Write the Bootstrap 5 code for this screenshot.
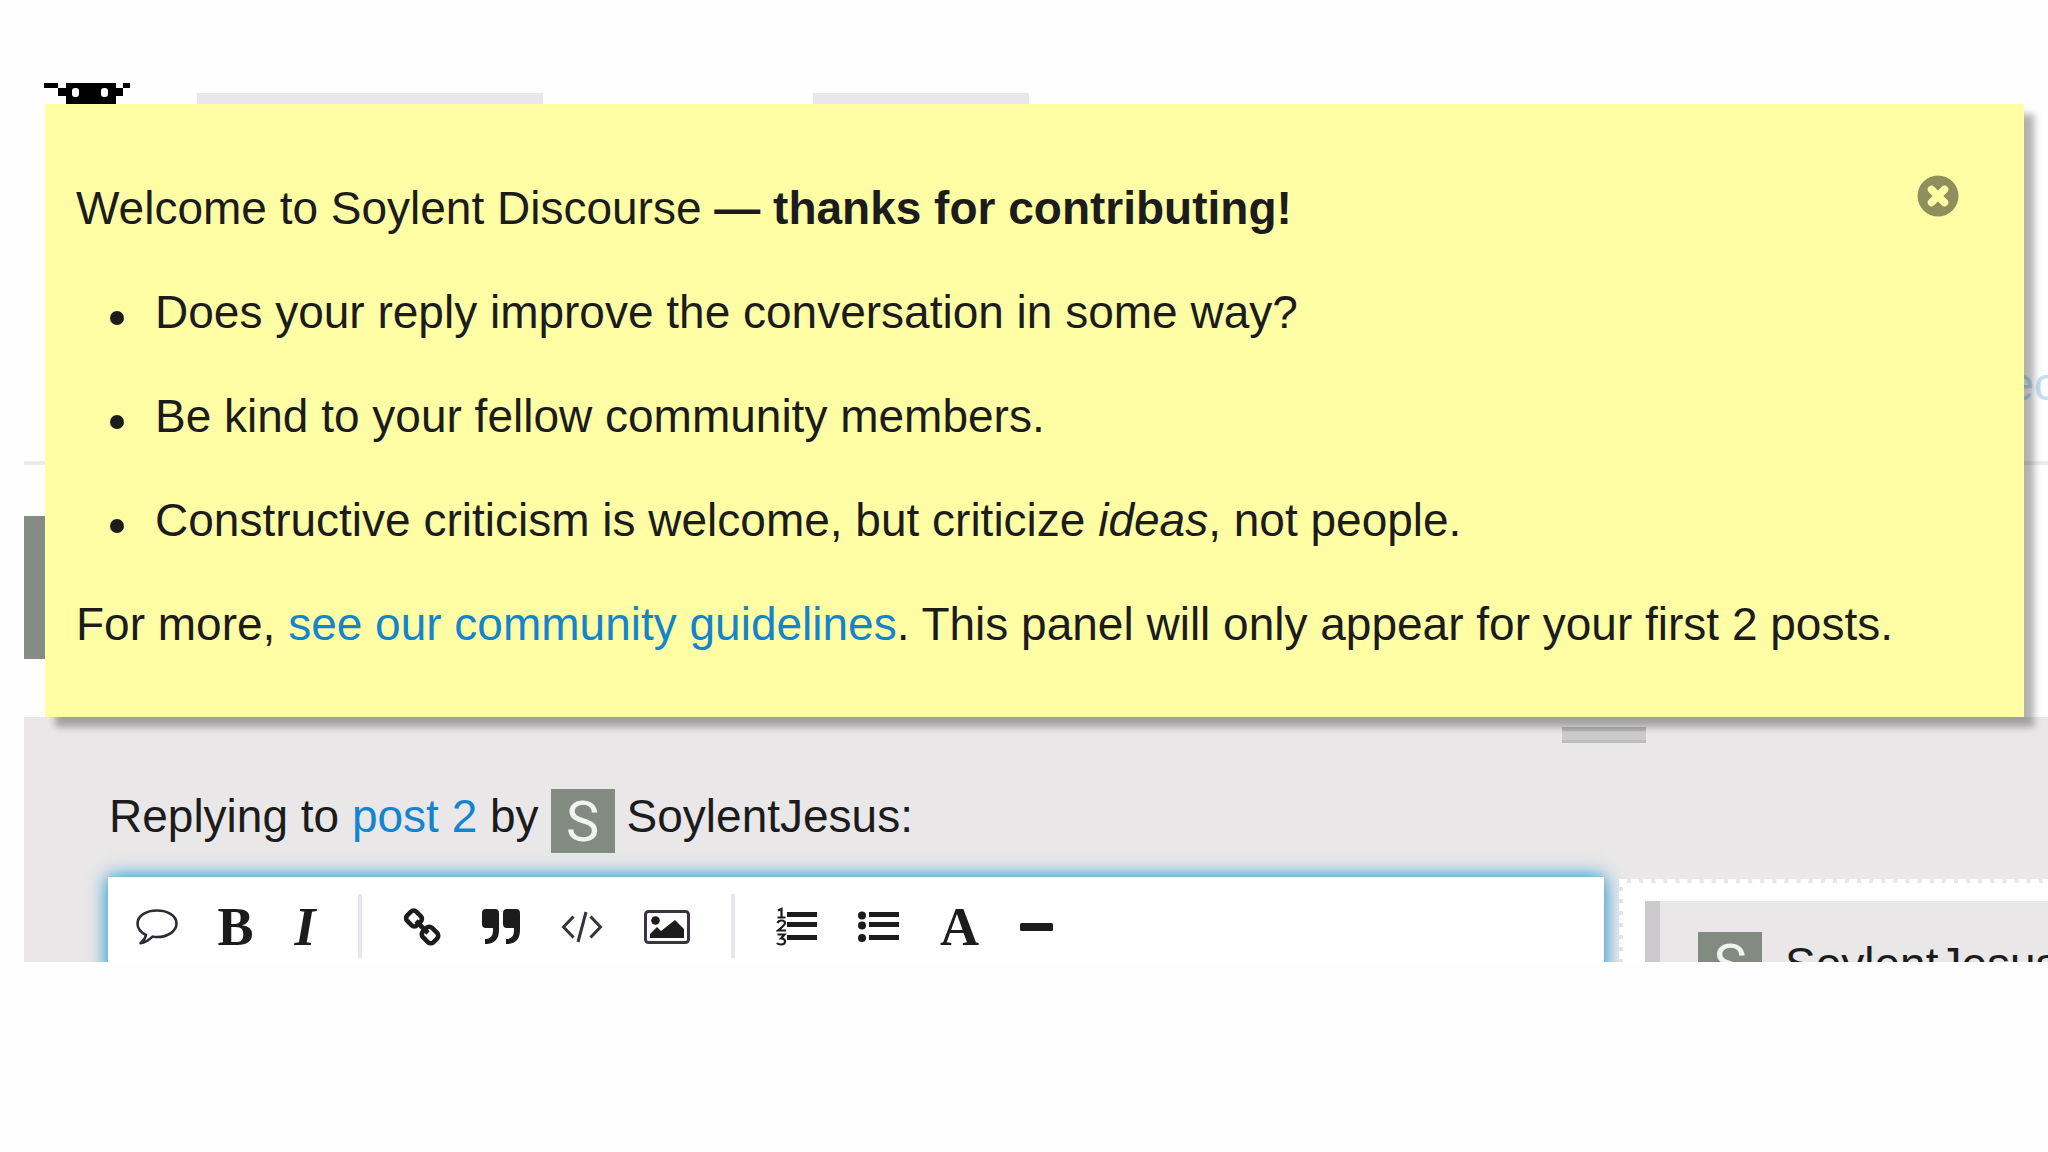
<!DOCTYPE html>
<html lang="en">
<head>
<meta charset="utf-8">
<meta name="viewport" content="width=device-width, initial-scale=1">
<title>Soylent Discourse</title>
<link href="https://cdn.jsdelivr.net/npm/bootstrap@5.3.0/dist/css/bootstrap.min.css" rel="stylesheet">
<style>
body{font-family:"Liberation Sans",Arial,sans-serif;font-size:46px;line-height:64px;color:#1c1c1c;background:#fefefe;overflow-x:hidden}
a{color:#1484cc;text-decoration:none}
.forum{margin:83px 0 0 24px}
.topic{height:634px}
.topic-head{padding-left:20px}
.invader{width:86px;height:21px}
.stub{height:11px;background:#e8e6ea;margin-top:10px}
.stub-title{width:346px;margin-left:67px}
.stub-meta{width:216px;margin-left:270px}
.topic-link{margin:248px -9px 0 0}
.topic-link a{color:#bfe0f5}
.topic-rule{height:4px;background:#ececec;margin-top:45px}
.side-avatar{width:64px;height:143px;background:#858b85;margin-top:51px}
.notice{top:21px;left:21px;right:24px;padding:72px 31px 61px;background:#fffea5;box-shadow:10px 10px 7px rgba(0,0,0,.3)}
.notice p,.notice li{margin-bottom:40px}
.notice ul{padding-left:32px;list-style:none}
.notice li{display:flex;gap:31px}
.notice li::before{content:"";flex:none;width:14px;height:14px;border-radius:50%;background:#1c1c1c;margin-top:31px;margin-left:2px}
.notice p:last-of-type{margin-bottom:0}
.notice-close{top:71px;right:65px;width:42px;height:42px}
.composer{height:245px;background:#e9e7e8}
.grip-row{padding:10px 0 0 76%}
.grip{width:84px;height:16px;background:#cccbcb;border-top:4px solid #b7b6b5;border-bottom:3px solid #bebcbc}
.reply-line{padding-left:85px;margin-top:41px;gap:12px}
.avatar{width:64px;height:64px;background:#828a82;color:#f1f3f0;font:400 56px/66px Roboto,sans-serif;text-align:center}
.reply-line .avatar{margin-top:5px}
.panes{padding-left:84px;margin-top:24px;gap:15px}
.editor{flex:0 0 1496px;background:#fff;box-shadow:0 0 18px #08c;height:140px}
.tools{padding:17px 28px;gap:41px}
.tools button{border:0;background:none;padding:2px 0 0;height:64px;color:#1c1c1c;display:flex;align-items:center;justify-content:center;font-family:"Liberation Serif",serif;font-weight:700;font-size:54px;line-height:62px}
.tool-b{width:33px}
.tool-i{width:24px}
.tool-a{width:39px}
.divider{width:4px;height:64px;background:#e8e6ea}
.preview{background:#fff;background-clip:padding-box;border:4px dashed #fff;height:140px;margin-top:2px;padding:18px 0 0 22px}
.quote-box{background:#e9e7e8;border-left:15px solid #cdcacd;height:120px;padding:31px 0 0 38px;gap:23px}
</style>
</head>
<body>
<main class="forum position-relative">
  <section class="topic overflow-hidden">
    <div class="topic-head d-flex">
      <svg class="invader" viewBox="0 0 86 21" aria-hidden="true"><path d="M0 0h14v5H22V0H72v5h7V0h7v5h-7v8h-7v8H22v-8h-8V5H0z"/><rect x="28" y="5" width="7" height="9" rx="3" fill="#fff"/><rect x="57" y="5" width="7" height="9" rx="3" fill="#fff"/></svg>
      <div class="stub stub-title"></div>
      <div class="stub stub-meta"></div>
    </div>
    <div class="topic-link d-flex justify-content-end"><a href="#">ec</a></div>
    <div class="topic-rule"></div>
    <div class="side-avatar"></div>
  </section>

  <section class="composer overflow-hidden">
    <div class="grip-row"><div class="grip"></div></div>
    <div class="reply-line d-flex">
      <span>Replying to <a href="#">post 2</a> by</span>
      <span class="avatar">S</span>
      <span>SoylentJesus:</span>
    </div>
    <div class="panes d-flex">
      <div class="editor">
        <div class="tools d-flex" role="toolbar" aria-label="Formatting">
          <button type="button" aria-label="Quote whole post"><svg width="42" height="36" viewBox="0 0 42 36" fill="none" stroke="#2c2c34" stroke-width="2.6" stroke-linejoin="round"><path d="M10 26C4 23 1.500 19 1.500 14.500 1.500 7 10 1.500 21 1.500S40.500 7 40.500 14.500 32 28 21 28c-2 0-3-.2-4.500-.4C13 31 9 33.500 4.500 34.300 7 32 9.500 29 10 26z"/></svg></button>
          <button type="button" class="tool-b">B</button>
          <button type="button" class="tool-i fst-italic">I</button>
          <span class="divider"></span>
          <button type="button" aria-label="Link"><svg width="38" height="40" viewBox="0 0 38 40" fill="none" stroke="#1c1c1c" stroke-width="4.600"><rect x="-7" y="-6.500" width="14" height="13" rx="4" transform="translate(11 11.500) rotate(45)"/><rect x="-7.500" y="-6.500" width="15" height="13" rx="4" transform="translate(27 28) rotate(45)"/><path d="M13 14l12 12"/></svg></button>
          <button type="button" aria-label="Quote"><svg width="38" height="36" viewBox="0 0 38 36" fill="#1c1c1c"><path d="M4 0h9q4 0 4 4v17q0 13-12 14H3v-5h2q6-1 6-9v-2H4q-4 0-4-4V4q0-4 4-4z"/><path d="M25 0h9q4 0 4 4v17q0 13-12 14h-2v-5h2q6-1 6-9v-2h-7q-4 0-4-4V4q0-4 4-4z"/></svg></button>
          <button type="button" aria-label="Code"><svg width="42" height="32" viewBox="0 0 42 32" fill="none" stroke="#34343c" stroke-width="3"><path d="M12.500 5.500L2.500 16l10 10.500M29.500 5.500l10 10.500-10 10.500"/><path d="M25 1l-8 30"/></svg></button>
          <button type="button" aria-label="Image"><svg width="46" height="36" viewBox="0 0 46 36"><rect x="1.500" y="2.500" width="43" height="31" rx="3" fill="none" stroke="#3c3440" stroke-width="3"/><circle cx="11.500" cy="11.500" r="4.300" fill="#1c1c1c"/><path d="M6 29v-4l7-7 4 4 14-11 9 9v9z" fill="#1c1c1c"/></svg></button>
          <span class="divider"></span>
          <button type="button" aria-label="Numbered list"><svg width="41" height="40" viewBox="0 0 41 40" fill="none" stroke="#1c1c1c"><path d="M11 7.500h30M11 17.500h30M11 30.500h30" stroke-width="5"/><path d="M2 3.500l3.500-1.500v8M1.500 10.500h8M1.500 16q1-2.500 4-2.500 3.500 0 3.500 2.500 0 2-7 7.500h8M1.500 27.500h7L5 31.500q4 0 4 3t-4 3q-3 0-4-1.500" stroke-width="2.200"/></svg></button>
          <button type="button" aria-label="Bulleted list"><svg width="41" height="40" viewBox="0 0 41 40"><path d="M11 7.500h30M11 17.500h30M11 30.500h30" stroke="#1c1c1c" stroke-width="5"/><g fill="#1c1c1c"><circle cx="4" cy="8.500" r="4"/><circle cx="4" cy="18.500" r="4"/><circle cx="4" cy="31" r="4"/></g></svg></button>
          <button type="button" class="tool-a">A</button>
          <button type="button" aria-label="Horizontal rule"><svg width="33" height="8" viewBox="0 0 33 8"><rect width="33" height="8" rx="1.500" fill="#1c1c1c"/></svg></button>
        </div>
      </div>
      <div class="preview flex-grow-1">
        <div class="quote-box d-flex">
          <span class="avatar">S</span>
          <span>SoylentJesus:</span>
        </div>
      </div>
    </div>
  </section>

  <aside class="notice position-absolute">
    <button type="button" class="notice-close position-absolute border-0 p-0 bg-transparent d-flex" aria-label="Close"><svg width="42" height="42" viewBox="0 0 42 42"><circle cx="21" cy="21" r="20.500" fill="#8f8e5d"/><path d="M14.500 14.500l13 13M27.500 14.500l-13 13" stroke="#fffea5" stroke-width="7.500" stroke-linecap="round"/></svg></button>
    <p>Welcome to Soylent Discourse <strong>— thanks for contributing!</strong></p>
    <ul class="mb-0">
      <li><span>Does your reply improve the conversation in some way?</span></li>
      <li><span>Be kind to your fellow community members.</span></li>
      <li><span>Constructive criticism is welcome, but criticize <em>ideas</em>, not people.</span></li>
    </ul>
    <p>For more, <a href="#">see our community guidelines</a>. This panel will only appear for your first 2 posts.</p>
  </aside>
</main>
<script src="https://cdn.jsdelivr.net/npm/bootstrap@5.3.0/dist/js/bootstrap.bundle.min.js"></script>
</body>
</html>
